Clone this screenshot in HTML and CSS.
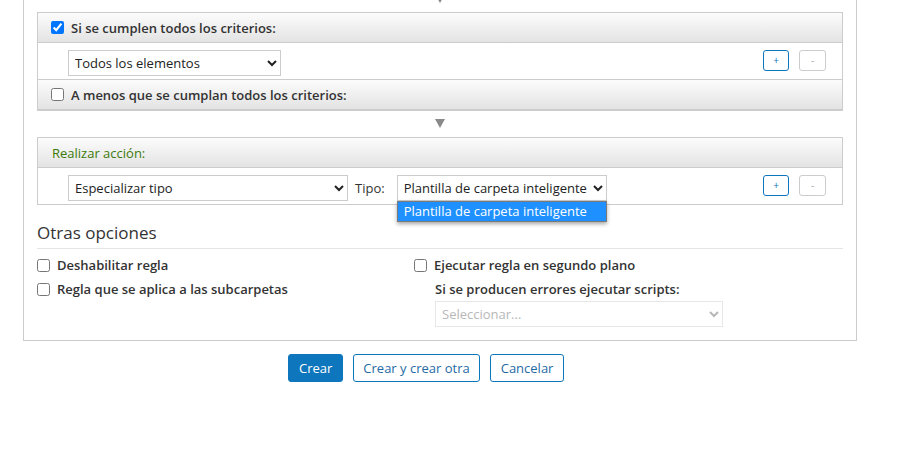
FILE: index.html
```html
<!DOCTYPE html>
<html lang="es">
<head>
<meta charset="utf-8">
<link rel="stylesheet" href="styles.css">
</head>
<body>
<div class="panel">
  <div class="flow-arrow"><span class="tri"></span></div>
  <div class="box">
    <div class="box-head"><label class="head-check"><input type="checkbox" checked><span>Si se cumplen todos los criterios:</span></label></div>
    <div class="box-row">
      <select class="sel sel-todos"><option>Todos los elementos</option></select>
      <div class="pm"><button class="pm-btn plus">+</button><button class="pm-btn minus">-</button></div>
    </div>
    <div class="box-head"><label class="head-check"><input type="checkbox"><span>A menos que se cumplan todos los criterios:</span></label></div>
  </div>
  <div class="flow-arrow"><span class="tri"></span></div>
  <div class="box">
    <div class="box-head"><span class="action-title">Realizar acción:</span></div>
    <div class="box-row">
      <select class="sel sel-esp"><option>Especializar tipo</option></select>
      <span class="tipo">Tipo:</span>
      <div class="dd-wrap">
        <select class="sel sel-tipo"><option>Plantilla de carpeta inteligente</option></select>
        <div class="dd-list"><div class="dd-item">Plantilla de carpeta inteligente</div></div>
      </div>
      <div class="pm"><button class="pm-btn plus">+</button><button class="pm-btn minus">-</button></div>
    </div>
  </div>
  <h3 class="section-title">Otras opciones</h3>
  <div class="opts">
    <div class="col">
      <label class="opt"><input type="checkbox"><span>Deshabilitar regla</span></label>
      <label class="opt"><input type="checkbox"><span>Regla que se aplica a las subcarpetas</span></label>
    </div>
    <div class="col">
      <label class="opt"><input type="checkbox"><span>Ejecutar regla en segundo plano</span></label>
      <div class="sub">
        <div class="sub-label">Si se producen errores ejecutar scripts:</div>
        <select class="sel sel-scripts" disabled><option>Seleccionar...</option></select>
      </div>
    </div>
  </div>
</div>
<div class="actions">
  <button class="btn btn-primary">Crear</button>
  <button class="btn btn-outline btn-wide">Crear y crear otra</button>
  <button class="btn btn-outline">Cancelar</button>
</div>
</body>
</html>
```

FILE: styles.css
```css
html, body {
  margin: 0;
  padding: 0;
  background: #ffffff;
}
body {
  font-family: "Open Sans", "Liberation Sans", sans-serif;
  font-size: 13px;
  color: #333333;
}
.panel {
  width: 806px;
  margin: -22px 0 0 23px;
  border: 1px solid #cccccc;
  padding: 7px 13px 13px 13px;
}
.flow-arrow {
  height: 26px;
  display: flex;
  justify-content: center;
  align-items: flex-start;
}
.tri {
  margin-top: 8px;
  width: 0;
  height: 0;
  border-left: 5px solid transparent;
  border-right: 5px solid transparent;
  border-top: 9px solid #8a8a8a;
}
.box {
  border: 1px solid #cccccc;
}
.box-head {
  height: 29px;
  border-bottom: 1px solid #cccccc;
  background: linear-gradient(#fcfcfc, #e3e3e3);
  display: flex;
  align-items: center;
  padding-left: 13px;
}
.box-row + .box-head {
  border-top: 1px solid #cccccc;
}
.head-check {
  display: flex;
  align-items: center;
  font-weight: 600;
}
.head-check input, .opt input {
  margin: 0 7px 0 0;
  width: 13px;
  height: 13px;
}
.action-title {
  color: #3b7a08;
  padding-left: 1px;
}
.box-row {
  height: 36px;
  display: flex;
  align-items: flex-start;
  padding: 7px 16px 0 30px;
  box-sizing: border-box;
}
.sel {
  height: 26px;
  border: 1px solid #cccccc;
  border-radius: 0;
  background: #ffffff;
  font-family: "Open Sans", "Liberation Sans", sans-serif;
  font-size: 13px;
  color: #222222;
  padding: 0 3px 0 2px;
  box-sizing: border-box;
}
.sel-todos { width: 213px; }
.sel-esp { width: 280px; }
.sel-tipo { width: 210px; }
.sel-scripts {
  width: 288px;
  color: #9a9a9a;
  background: #ffffff;
  border-color: #dddddd;
}
.tipo {
  line-height: 26px;
  margin: 0 12px 0 7px;
}
.dd-wrap {
  position: relative;
}
.dd-list {
  position: absolute;
  left: 0;
  top: 26px;
  width: 210px;
  box-sizing: border-box;
  border: 1px solid #7a7a7a;
  background: #1e90ff;
  box-shadow: 0 2px 4px rgba(0, 0, 0, 0.35);
  z-index: 5;
}
.dd-item {
  height: 19px;
  line-height: 18px;
  color: #ffffff;
  padding-left: 6px;
  white-space: nowrap;
}
.pm {
  margin-left: auto;
  display: flex;
  gap: 10px;
}
.pm-btn {
  width: 26px;
  height: 21px;
  padding: 0;
  border-radius: 3px;
  background: #ffffff;
  font-family: "Open Sans", "Liberation Sans", sans-serif;
  font-size: 10px;
  line-height: 19px;
}
.pm-btn.plus {
  border: 1px solid #0e76bc;
  color: #0e76bc;
}
.pm-btn.minus {
  width: 27px;
  border: 1px solid #cccccc;
  color: #aaaaaa;
}
.section-title {
  margin: 16px 0 0 0;
  padding-bottom: 3px;
  font-size: 17px;
  line-height: 24px;
  font-weight: 400;
  color: #333333;
  border-bottom: 1px solid #e5e5e5;
}
.opts {
  display: grid;
  grid-template-columns: 377px 1fr;
  padding-top: 6px;
}
.col {
  display: flex;
  flex-direction: column;
  gap: 4px;
}
.opt {
  display: flex;
  align-items: center;
  height: 20px;
  line-height: 20px;
  font-weight: 600;
}
.sub {
  padding-left: 21px;
  display: flex;
  flex-direction: column;
  gap: 2px;
}
.sub-label {
  line-height: 20px;
  font-weight: 600;
}
.actions {
  display: flex;
  gap: 10px;
  margin-top: 13px;
  padding-left: 288px;
}
.btn {
  height: 28px;
  padding: 0 10px;
  border-radius: 3px;
  font-family: "Open Sans", "Liberation Sans", sans-serif;
  font-size: 13px;
}
.btn-wide {
  padding: 0 9px;
}
.btn-primary {
  background: #0e76bc;
  border: 1px solid #0e76bc;
  color: #ffffff;
}
.btn-outline {
  background: #ffffff;
  border: 1px solid #0e76bc;
  color: #1f6aa5;
}
```
